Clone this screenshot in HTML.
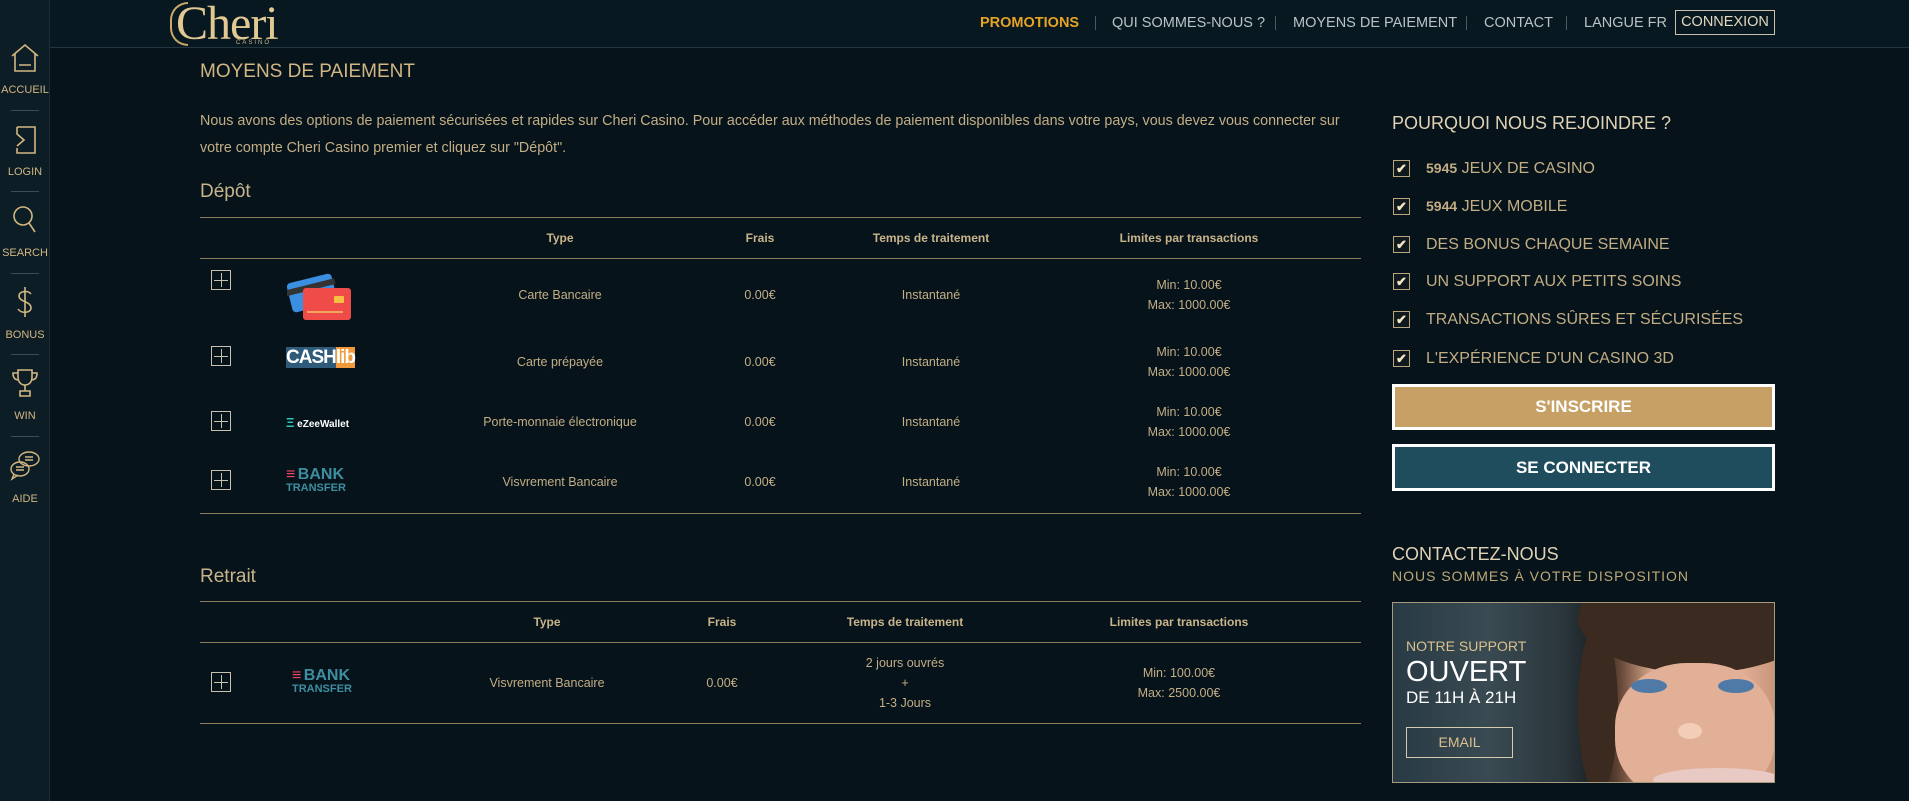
<!DOCTYPE html>
<html><head><meta charset="utf-8">
<style>
*{margin:0;padding:0;box-sizing:border-box}
body{width:1909px;height:801px;overflow:hidden;background:#06131a;font-family:"Liberation Sans",sans-serif;color:#c9b48a;position:relative}
.a{position:absolute;white-space:nowrap}
#side{position:absolute;left:0;top:0;width:50px;height:801px;background:#0c1d25;border-right:1px solid #1c2f38}
.sl{position:absolute;left:0;width:50px;text-align:center;font-size:11px;color:#d2b683}
.sep{position:absolute;left:11px;width:28px;height:1px;background:#3a4b52}
.ic{position:absolute;left:9px;width:32px;height:32px}
#hdr{position:absolute;left:50px;top:0;width:1859px;height:48px;background:#081820;border-bottom:1px solid #24363f}
.nav{font-size:14.5px;color:#b9c3c6;top:15px}
.bar{top:16px;width:1px;height:14px;background:#4c5a60}
.th{font-size:12px;font-weight:bold;color:#c9b48a;transform:translateX(-50%);text-align:center}
.td{font-size:12.5px;color:#c3ae86;transform:translateX(-50%);text-align:center;line-height:20px}
.hl{position:absolute;left:200px;width:1161px;height:1px;background:#8c7c5c}
.pl{position:absolute;left:211px;width:20px;height:20px;border:1px solid #c9c0ae}
.pl:before{content:"";position:absolute;left:9px;top:2px;width:1px;height:14px;background:#c9c0ae}
.pl:after{content:"";position:absolute;left:2px;top:9px;width:14px;height:1px;background:#c9c0ae}
.cb{position:absolute;left:1393px;width:17px;height:17px;border:1px solid #b9a67e;background:#101a1e;color:#f3e4c2;font-size:13px;line-height:15px;text-align:center;font-weight:bold}
.ct{left:1426px;font-size:16px;color:#c2ad84}
</style></head><body>

<div id="side">
 <svg class="ic" style="top:42px" viewBox="0 0 32 32" fill="none" stroke="#d2b683" stroke-width="1.6"><path d="M3 14 L16 3 L29 14 M6 12 V29 H26 V12 M10 23 H22"/></svg>
 <div class="sl" style="top:84px">ACCUEIL</div>
 <div class="sep" style="top:110px"></div>
 <svg class="ic" style="top:124px" viewBox="0 0 32 32" fill="none" stroke="#d2b683" stroke-width="1.6"><path d="M8 3 H26 V29 H8 V24 M8 3 V10 L15 16 L8 22"/></svg>
 <div class="sl" style="top:166px">LOGIN</div>
 <div class="sep" style="top:191px"></div>
 <svg class="ic" style="top:204px" viewBox="0 0 32 32" fill="none" stroke="#d2b683" stroke-width="1.6"><circle cx="14" cy="12" r="9"/><path d="M20 19 L26 28"/></svg>
 <div class="sl" style="top:247px">SEARCH</div>
 <div class="sep" style="top:273px"></div>
 <svg class="ic" style="top:286px" viewBox="0 0 32 32" fill="none" stroke="#d2b683" stroke-width="1.6"><path d="M16 1 V31 M22 8 C19 4 10 5 10 10 C10 16 22 15 22 22 C22 27 12 28 9 23"/></svg>
 <div class="sl" style="top:329px">BONUS</div>
 <div class="sep" style="top:354px"></div>
 <svg class="ic" style="top:367px" viewBox="0 0 32 32" fill="none" stroke="#d2b683" stroke-width="1.6"><path d="M9 3 H23 V10 C23 15 20 18 16 18 C12 18 9 15 9 10 Z M9 6 H4 C4 12 7 13 10 13 M23 6 H28 C28 12 25 13 22 13 M16 18 V24 M11 24 H21 V29 H11 Z"/></svg>
 <div class="sl" style="top:410px">WIN</div>
 <div class="sep" style="top:436px"></div>
 <svg class="ic" style="top:449px" viewBox="0 0 32 32" fill="none" stroke="#d2b683" stroke-width="1.4"><ellipse cx="20" cy="10" rx="10" ry="7"/><ellipse cx="11" cy="20" rx="9" ry="7"/><path d="M5 25 L3 30 L9 26 M7 18 H15 M7 21 H15 M16 8 H24 M16 11 H24"/></svg>
 <div class="sl" style="top:493px">AIDE</div>
</div>

<div id="hdr"></div>
<div class="a" style="left:170px;top:2px;width:18px;height:44px;border:2px solid #c9a86a;border-right:none;border-radius:20px 0 0 20px"></div>
<div class="a" style="left:176px;top:-4px;font-family:'Liberation Serif',serif;font-size:48px;color:#e0c992;letter-spacing:-1px">Cheri</div>
<div class="a" style="left:236px;top:40px;font-size:6px;letter-spacing:2px;color:#c9b48a">CASINO</div>

<div class="a nav" style="left:980px;color:#e6a325;font-weight:bold">PROMOTIONS</div>
<div class="a bar" style="left:1095px"></div>
<div class="a nav" style="left:1112px">QUI SOMMES-NOUS ?</div>
<div class="a bar" style="left:1275px"></div>
<div class="a nav" style="left:1293px">MOYENS DE PAIEMENT</div>
<div class="a bar" style="left:1466px"></div>
<div class="a nav" style="left:1484px">CONTACT</div>
<div class="a bar" style="left:1566px"></div>
<div class="a nav" style="left:1584px">LANGUE FR</div>
<div class="a" style="left:1675px;top:10px;width:100px;height:25px;border:1px solid #c9c0ae;color:#e3d8bf;font-size:14.5px;text-align:center;line-height:23px">CONNEXION</div>

<div class="a" style="left:200px;top:61px;font-size:19px;color:#d2b683">MOYENS DE PAIEMENT</div>
<div class="a" style="left:200px;top:108px;width:1165px;white-space:normal;font-size:14.3px;line-height:27px;color:#c3ae86">Nous avons des options de paiement sécurisées et rapides sur Cheri Casino. Pour accéder aux méthodes de paiement disponibles dans votre pays, vous devez vous connecter sur votre compte Cheri Casino premier et cliquez sur "Dépôt".</div>
<div class="a" style="left:200px;top:181px;font-size:19px;color:#c9b48a">Dépôt</div>

<div class="hl" style="top:217px"></div>
<div class="hl" style="top:258px"></div>
<div class="hl" style="top:513px"></div>
<div class="a th" style="left:560px;top:231px">Type</div>
<div class="a th" style="left:760px;top:231px">Frais</div>
<div class="a th" style="left:931px;top:231px">Temps de traitement</div>
<div class="a th" style="left:1189px;top:231px">Limites par transactions</div>

<div class="pl" style="top:270px"></div>
<svg class="a" style="left:287px;top:268px" width="66" height="56" viewBox="0 0 66 56"><rect x="2" y="10" width="46" height="30" rx="4" fill="#3b8fe0" transform="rotate(-14 25 25)"/><rect x="0" y="16" width="50" height="6" fill="#333" transform="rotate(-14 25 25)"/><rect x="16" y="20" width="48" height="32" rx="3" fill="#ef4c49"/><rect x="47" y="28" width="10" height="7" rx="1" fill="#f6c142"/><rect x="20" y="43" width="36" height="2" fill="#f3a35c"/></svg>
<div class="a td" style="left:560px;top:285px">Carte Bancaire</div>
<div class="a td" style="left:760px;top:285px">0.00€</div>
<div class="a td" style="left:931px;top:285px">Instantané</div>
<div class="a td" style="left:1189px;top:275px">Min: 10.00€<br>Max: 1000.00€</div>

<div class="pl" style="top:346px"></div>
<div class="a" style="left:286px;top:347px;width:70px;height:28px;font-weight:bold;font-size:19px;letter-spacing:-1px;color:#fff"><span style="background:#2f5a7a">CASH</span><span style="background:#f09a3c">lib</span></div>
<div class="a td" style="left:560px;top:352px">Carte prépayée</div>
<div class="a td" style="left:760px;top:352px">0.00€</div>
<div class="a td" style="left:931px;top:352px">Instantané</div>
<div class="a td" style="left:1189px;top:342px">Min: 10.00€<br>Max: 1000.00€</div>

<div class="pl" style="top:411px"></div>
<div class="a" style="left:286px;top:415px;font-size:10px;font-weight:bold;color:#fff"><span style="color:#2ec4b6;font-size:13px">Ξ</span> eZeeWallet</div>
<div class="a td" style="left:560px;top:412px">Porte-monnaie électronique</div>
<div class="a td" style="left:760px;top:412px">0.00€</div>
<div class="a td" style="left:931px;top:412px">Instantané</div>
<div class="a td" style="left:1189px;top:402px">Min: 10.00€<br>Max: 1000.00€</div>

<div class="pl" style="top:470px"></div>
<div class="a" style="left:286px;top:469px;line-height:12px;font-weight:bold;color:#3d8ea0"><span style="font-size:16px;color:#e46;letter-spacing:-2px">≡</span><span style="font-size:16px"> BANK</span><br><span style="font-size:11px">TRANSFER</span></div>
<div class="a td" style="left:560px;top:472px">Visvrement Bancaire</div>
<div class="a td" style="left:760px;top:472px">0.00€</div>
<div class="a td" style="left:931px;top:472px">Instantané</div>
<div class="a td" style="left:1189px;top:462px">Min: 10.00€<br>Max: 1000.00€</div>

<div class="a" style="left:200px;top:566px;font-size:19px;color:#c9b48a">Retrait</div>
<div class="hl" style="top:601px"></div>
<div class="hl" style="top:642px"></div>
<div class="hl" style="top:723px"></div>
<div class="a th" style="left:547px;top:615px">Type</div>
<div class="a th" style="left:722px;top:615px">Frais</div>
<div class="a th" style="left:905px;top:615px">Temps de traitement</div>
<div class="a th" style="left:1179px;top:615px">Limites par transactions</div>
<div class="pl" style="top:672px"></div>
<div class="a" style="left:292px;top:670px;line-height:12px;font-weight:bold;color:#3d8ea0"><span style="font-size:16px;color:#e46;letter-spacing:-2px">≡</span><span style="font-size:16px"> BANK</span><br><span style="font-size:11px">TRANSFER</span></div>
<div class="a td" style="left:547px;top:673px">Visvrement Bancaire</div>
<div class="a td" style="left:722px;top:673px">0.00€</div>
<div class="a td" style="left:905px;top:653px">2 jours ouvrés<br>+<br>1-3 Jours</div>
<div class="a td" style="left:1179px;top:663px">Min: 100.00€<br>Max: 2500.00€</div>

<div class="a" style="left:1392px;top:113px;font-size:18px;color:#e0d2b4">POURQUOI NOUS REJOINDRE ?</div>
<div class="cb" style="top:160px">✔</div><div class="a ct" style="top:160px"><b style="font-size:14px">5945</b> JEUX DE CASINO</div>
<div class="cb" style="top:198px">✔</div><div class="a ct" style="top:198px"><b style="font-size:14px">5944</b> JEUX MOBILE</div>
<div class="cb" style="top:236px">✔</div><div class="a ct" style="top:236px">DES BONUS CHAQUE SEMAINE</div>
<div class="cb" style="top:273px">✔</div><div class="a ct" style="top:273px">UN SUPPORT AUX PETITS SOINS</div>
<div class="cb" style="top:311px">✔</div><div class="a ct" style="top:311px">TRANSACTIONS SÛRES ET SÉCURISÉES</div>
<div class="cb" style="top:350px">✔</div><div class="a ct" style="top:350px">L'EXPÉRIENCE D'UN CASINO 3D</div>
<div class="a" style="left:1392px;top:384px;width:383px;height:46px;background:#c6a064;border:3px solid #fff;color:#fff;font-weight:bold;font-size:17px;text-align:center;line-height:40px">S'INSCRIRE</div>
<div class="a" style="left:1392px;top:444px;width:383px;height:47px;background:#1f4d5e;border:3px solid #fff;color:#fff;font-weight:bold;font-size:17px;text-align:center;line-height:41px">SE CONNECTER</div>
<div class="a" style="left:1392px;top:544px;font-size:18px;color:#e0d2b4">CONTACTEZ-NOUS</div>
<div class="a" style="left:1392px;top:568px;font-size:14px;letter-spacing:1px;color:#bda978">NOUS SOMMES À VOTRE DISPOSITION</div>
<div class="a" style="left:1392px;top:602px;width:383px;height:181px;border:1px solid #a79a7c;overflow:hidden;background:linear-gradient(90deg,#283a44 0%,#3a4a52 25%,#2a363c 45%,#1d2426 52%,#3a2c22 56%,#6a4a3a 60%,#d9a88c 68%,#e6b49b 90%,#c9967c 100%)">
 <div style="position:absolute;left:185px;top:-40px;width:240px;height:110px;border-radius:50%;background:#3a2a20"></div>
 <div style="position:absolute;left:185px;top:20px;width:40px;height:170px;border-radius:50%;background:#3a2a20"></div>
 <div style="position:absolute;left:222px;top:60px;width:160px;height:140px;border-radius:45%;background:#e2b096"></div>
 <div style="position:absolute;left:238px;top:76px;width:36px;height:14px;border-radius:50%;background:#4f7aa8"></div>
 <div style="position:absolute;left:325px;top:76px;width:36px;height:14px;border-radius:50%;background:#4f7aa8"></div>
 <div style="position:absolute;left:285px;top:120px;width:24px;height:16px;border-radius:50%;background:#f3cdb8"></div>
 <div style="position:absolute;left:260px;top:165px;width:130px;height:24px;border-radius:50%;background:#e9c9c4"></div>
</div>
<div class="a" style="left:1406px;top:638px;font-size:14px;color:#d8c08f">NOTRE SUPPORT</div>
<div class="a" style="left:1406px;top:656px;font-size:29px;color:#fff">OUVERT</div>
<div class="a" style="left:1406px;top:688px;font-size:17px;color:#fff">DE 11H À 21H</div>
<div class="a" style="left:1406px;top:727px;width:107px;height:31px;border:1px solid #d6cbb0;color:#d8c08f;font-size:14px;text-align:center;line-height:29px">EMAIL</div>
</body></html>
